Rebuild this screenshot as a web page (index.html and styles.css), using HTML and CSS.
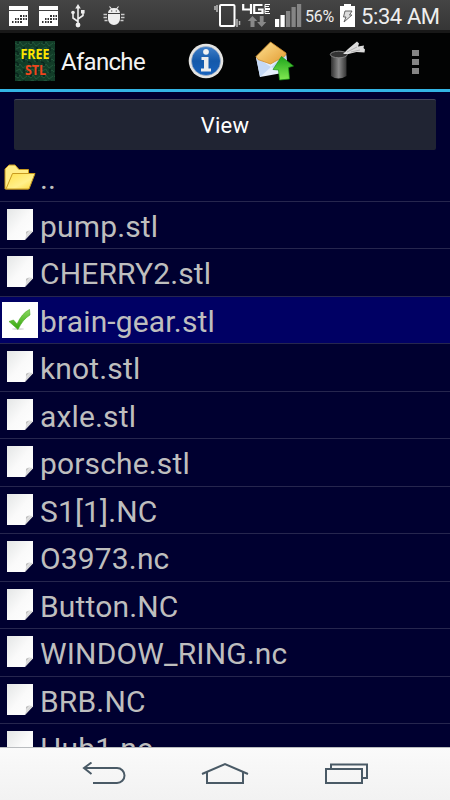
FILE: index.html
```
<!DOCTYPE html>
<html lang="en">
<head>
    <meta charset="UTF-8">
    <meta name="viewport" content="width=device-width, initial-scale=1.0">
    <title>Afanche</title>
    <link rel="stylesheet" href="styles.css">
</head>
<body>
    <!-- shared icons -->
    <svg class="defs" width="0" height="0">
        <defs>
            <linearGradient id="paper" x1="0" y1="0" x2="1" y2="1">
                <stop offset="0" stop-color="#e4e6e6"/>
                <stop offset="0.5" stop-color="#fafafa"/>
                <stop offset="1" stop-color="#ffffff"/>
            </linearGradient>
            <linearGradient id="curl" x1="0" y1="0" x2="1" y2="1">
                <stop offset="0" stop-color="#777"/>
                <stop offset="0.35" stop-color="#e4e4e4"/>
                <stop offset="1" stop-color="#8a8a8a"/>
            </linearGradient>
            <symbol id="file" viewBox="0 0 28 34">
                <path d="M1 1h26v22.500l-8 8.500H1z" fill="url(#paper)"/>
                <path d="M27 23q-5-1.500-7 1 .5 5-1.500 8z" fill="url(#curl)"/>
            </symbol>
            <symbol id="calendar" viewBox="0 0 20 21">
                <path d="M0 0h19v4H0zM0 5h19v15H0z" fill="#fff"/>
                <path d="M11 9h2v2h-2zM14 9h1.500v2H14zM16.500 9H18v2h-1.500zM6 12h1.500v2H6zM8.500 12H10v2H8.500zM11 12h2v2h-2zM14 12h1.500v2H14zM16.500 12H18v2h-1.500zM3 15h1.500v2H3zM6 15h1.500v2H6zM8.500 15H10v2H8.500zM11 15h2v2h-2z" fill="#333"/>
            </symbol>
        </defs>
    </svg>

    <div class="status-bar">
        <svg class="calendar" width="20" height="21"><use href="#calendar"/></svg>
        <svg class="calendar" width="20" height="21"><use href="#calendar"/></svg>
        <svg class="usb" width="14" height="24" viewBox="0 0 14 24" fill="none" stroke="#eee" stroke-width="1.600">
            <path d="M7 3v18M7 17.500L2 14V9M7 15l5-3.500V8"/>
            <path d="M7 0l2.800 4.500H4.200zM10 6h3.600v3.600H10z" fill="#eee" stroke="none"/>
            <circle cx="2" cy="8.500" r="1.800" fill="#eee" stroke="none"/>
            <circle cx="7" cy="21" r="2.400" fill="#eee" stroke="none"/>
        </svg>
        <svg class="bug" width="22" height="20" viewBox="0 0 22 20" fill="#eee">
            <path d="M5 7a6 5 0 0 1 12 0zM5 8h12v5a6 6 0 0 1-12 0z"/>
            <path d="M6.500 .5l2 2.500M15.500 .5l-2 2.500" stroke="#eee" stroke-width="1.200"/>
            <path d="M.5 8.500H4M.5 11.500H4M1.500 14.500h3M18 8.500h3.500M18 11.500h3.500M17.500 14.500h3" stroke="#ccc" stroke-width="1.500"/>
            <path d="M8 4.500h1.300v1H8zM12.700 4.500H14v1h-1.300z" fill="#444"/>
        </svg>
        <svg class="vibrate" width="28" height="25" viewBox="0 0 28 25" fill="none" stroke="#fff">
            <rect x="6" y="1" width="14.500" height="21" rx="1" stroke-width="2"/>
            <path d="M3 1v7M1 2v4M23 15v8M25.500 17v4" stroke="#bbb" stroke-width="1.500"/>
        </svg>
        <svg class="network" width="30" height="25" viewBox="0 0 30 25">
            <path d="M1.200 0v5.500h8.300M9 0v10M20.500 1h-8.300v8h8.300V5.500h-4.500" fill="none" stroke="#fff" stroke-width="2.200"/>
            <path d="M28 .5h-5v4h5M23 2.500h4M28 5.500h-5v4h5M23 7.500h4" fill="none" stroke="#fff" stroke-width="1"/>
            <path d="M10.500 12l4.800 5h-2.800v6H8.500v-6H5.700zM19.700 23l-4.600-5h2.700v-6h3.800v6h2.700z" fill="#888"/>
        </svg>
        <svg class="signal" width="27" height="24" viewBox="0 0 27 24">
            <path d="M0 15h4.200v8H0zM5.500 11h4.200v12H5.500z" fill="#fff"/>
            <path d="M11 7h4.200v16H11zM16.500 3h4.200v20h-4.200zM22 0h4.200v23H22z" fill="#858585"/>
        </svg>
        <span class="percent">56%</span>
        <svg class="battery" width="15" height="24" viewBox="0 0 15 24">
            <path d="M4 0h7v2h4v21H0V2h4z" fill="#fff"/>
            <path d="M5 7h7l-2.500 4H12L4 18l2-5H3.500z" fill="#ddd" stroke="#555" stroke-width=".9"/>
        </svg>
        <span class="clock">5:34 AM</span>
    </div>

    <div class="action-bar">
        <svg class="logo" width="40" height="40" viewBox="0 0 40 40">
            <defs>
                <pattern id="board" width="13" height="11" patternUnits="userSpaceOnUse">
                    <rect width="13" height="11" fill="#123d28"/>
                    <path d="M0 2l3 2 2-3 3 4 4-3M1 8l4-2 2 4 4-3 2 2" stroke="#22573b" fill="none"/>
                    <path d="M3 0v3M9 6v4M0 10l3 1" stroke="#08251c" stroke-width="1.500"/>
                </pattern>
            </defs>
            <rect width="40" height="40" fill="url(#board)"/>
            <text x="5.500" y="18" textLength="29" lengthAdjust="spacingAndGlyphs" fill="#ffe600">FREE</text>
            <text x="10" y="33.500" textLength="21" lengthAdjust="spacingAndGlyphs" fill="#f0451c">STL</text>
        </svg>
        <h1>Afanche</h1>
        <svg class="info" width="36" height="36" viewBox="0 0 36 36">
            <defs>
                <linearGradient id="blue" x1="0" y1="0" x2="0" y2="1">
                    <stop offset="0" stop-color="#3f7fc9"/>
                    <stop offset="0.5" stop-color="#1459aa"/>
                    <stop offset="1" stop-color="#1762bd"/>
                </linearGradient>
            </defs>
            <circle cx="18" cy="18" r="17.300" fill="#e4e4e2"/>
            <circle cx="18" cy="18" r="14.500" fill="url(#blue)" stroke="#a9b4c4" stroke-width=".6"/>
            <circle cx="18" cy="8.800" r="2.900" fill="#f2f2f2"/>
            <path d="M13.500 14h7v11.500h2.500v3H13v-3h3v-8.500h-2.500z" fill="#ececec"/>
        </svg>
        <svg class="mail" width="40" height="40" viewBox="0 0 40 40">
            <defs>
                <linearGradient id="flap" x1="0" y1="0" x2="1" y2="1">
                    <stop offset="0" stop-color="#ffe394"/>
                    <stop offset="1" stop-color="#e29a30"/>
                </linearGradient>
                <linearGradient id="arrow" x1="0" y1="0" x2="0" y2="1">
                    <stop offset="0" stop-color="#1fa51c"/>
                    <stop offset="1" stop-color="#82ea52"/>
                </linearGradient>
            </defs>
            <path d="M1 16l30-4 2 19-28 5z" fill="#e6effc"/>
            <path d="M1 16l15 10L5 36zM31 12L16 26l17 7z" fill="#c5d9f6"/>
            <path d="M1 15.500L15.500 1 31 12 30 15 15.500 23 3 18.500z" fill="url(#flap)" stroke="#d18e2c" stroke-width=".8"/>
            <path d="M26.500 15.500L38.500 25l-5 1.500 1 11.500-10 1-1-10-5.500-.5z" fill="url(#arrow)" stroke="#179416" stroke-width=".7"/>
        </svg>
        <svg class="trash" width="37" height="39" viewBox="0 0 37 39">
            <defs>
                <linearGradient id="can">
                    <stop offset="0" stop-color="#303030"/>
                    <stop offset="0.500" stop-color="#8b8b8b"/>
                    <stop offset="1" stop-color="#333"/>
                </linearGradient>
            </defs>
            <path d="M2 14v21q7 5 15.500 0V14z" fill="url(#can)"/>
            <ellipse cx="9.800" cy="13.500" rx="8.500" ry="3.300" fill="#333" stroke="#858585"/>
            <path d="M14 13l5-5L28 .5l2 2-1 3 6-1-.5 2.500 1.500 1.500-.5 3-8-.5-8 2-4 0z" fill="#dcdcdc"/>
            <path d="M18 11l10-5M22 11l9-2" stroke="#b0b0b0" fill="none"/>
        </svg>
        <div class="overflow"><i></i><i></i><i></i></div>
    </div>

    <div class="content">
        <button class="view-btn">View</button>
        <ul class="file-list">
            <li>
                <svg class="folder" width="34" height="28" viewBox="0 0 34 28">
                    <defs>
                        <linearGradient id="yellow" x1="0" y1="0" x2="1" y2="1">
                            <stop offset="0" stop-color="#ffe04a"/>
                            <stop offset="0.600" stop-color="#fff08b"/>
                            <stop offset="1" stop-color="#fbd83d"/>
                        </linearGradient>
                    </defs>
                    <path d="M1 26V6l4-4h6l4 4.500h9.500V14L24 26z" fill="#ffec86" stroke="#c89a20"/>
                    <path d="M2 26L8.500 10.500H31L25 26z" fill="url(#yellow)" stroke="#c89a20"/>
                </svg>
                <span>..</span>
            </li>
            <li><svg class="file" width="28" height="34"><use href="#file"/></svg><span>pump.stl</span></li>
            <li><svg class="file" width="28" height="34"><use href="#file"/></svg><span>CHERRY2.stl</span></li>
            <li class="selected">
                <svg class="check" width="36" height="36" viewBox="0 0 36 36">
                    <defs>
                        <linearGradient id="green" x1="0" y1="0" x2="0" y2="1">
                            <stop offset="0" stop-color="#8ad860"/>
                            <stop offset="1" stop-color="#35a60c"/>
                        </linearGradient>
                    </defs>
                    <rect width="36" height="36" fill="#fff"/>
                    <ellipse cx="16" cy="27" rx="6" ry="1" fill="#ddd"/>
                    <path d="M7 19.500l4.500-1.500 3.500 4Q20 11 27.500 7.500l.5 5.500Q21 17 16 27.500z" fill="url(#green)" stroke="#46a824" stroke-width=".6"/>
                </svg>
                <span>brain-gear.stl</span>
            </li>
            <li><svg class="file" width="28" height="34"><use href="#file"/></svg><span>knot.stl</span></li>
            <li><svg class="file" width="28" height="34"><use href="#file"/></svg><span>axle.stl</span></li>
            <li><svg class="file" width="28" height="34"><use href="#file"/></svg><span>porsche.stl</span></li>
            <li><svg class="file" width="28" height="34"><use href="#file"/></svg><span>S1[1].NC</span></li>
            <li><svg class="file" width="28" height="34"><use href="#file"/></svg><span>O3973.nc</span></li>
            <li><svg class="file" width="28" height="34"><use href="#file"/></svg><span>Button.NC</span></li>
            <li><svg class="file" width="28" height="34"><use href="#file"/></svg><span>WINDOW_RING.nc</span></li>
            <li><svg class="file" width="28" height="34"><use href="#file"/></svg><span>BRB.NC</span></li>
            <li><svg class="file" width="28" height="34"><use href="#file"/></svg><span>Hub1.nc</span></li>
        </ul>
    </div>

    <div class="nav-bar">
        <svg width="44" height="24" viewBox="0 0 44 24">
            <path d="M2 6h33a7.500 7.500 0 0 1 0 15H11M9.500 .5L2 6l7.500 6"/>
        </svg>
        <svg width="48" height="24" viewBox="0 0 48 24">
            <path d="M1 12L24 2l23 10M6 10v11h36V10"/>
        </svg>
        <svg width="44" height="24" viewBox="0 0 44 24">
            <path d="M2 7h36v14H2zM7 7V2.500h36V16h-5"/>
        </svg>
    </div>
</body>
</html>
```
FILE: styles.css
```
:root {
    --background: #000030;
    --selected: #000064;
    --divider: #26264e;
    --accent: #33b5e5;
    --text-color: #bebebe;
}

* {
    margin: 0;
    padding: 0;
    box-sizing: border-box;
    font-family: Roboto, sans-serif;
}

body {
    width: 450px;
    height: 800px;
    overflow: hidden;
    display: flex;
    flex-direction: column;
    background-color: #000;
}

svg {
    display: block;
    flex: none;
}

.defs {
    position: absolute;
}

.status-bar {
    height: 33px;
    flex: none;
    display: flex;
    align-items: flex-start;
    padding: 4px 0 0 9px;
    color: #eee;
    background: linear-gradient(#454545, #363636 30px, #181818 30px);
}

.calendar {
    margin: 2px 10px 0 0;
}

.usb {
    margin: 0 17px 0 2px;
}

.bug {
    margin: 2px 0 0 1px;
}

.vibrate {
    margin-left: 89px;
}

.network {
    margin-left: 0;
}

.signal {
    margin-left: 3px;
}

.percent {
    width: 30px;
    margin-left: 3px;
    font-size: 16px;
    line-height: 25px;
    letter-spacing: -0.3px;
}

.battery {
    margin-left: 5px;
}

.clock {
    margin-left: 6px;
    font-size: 22px;
    line-height: 25px;
    letter-spacing: -0.4px;
    white-space: nowrap;
}

.action-bar {
    height: 59px;
    flex: none;
    display: flex;
    align-items: center;
    padding-left: 15px;
    background-color: #020303;
    border-bottom: 3px solid var(--accent);
}

.logo text {
    font-family: "Open Sans", sans-serif;
    font-size: 14px;
    font-weight: 700;
}

.action-bar h1 {
    width: 127px;
    margin-left: 6px;
    padding-top: 2px;
    font-size: 24px;
    font-weight: 400;
    letter-spacing: -0.700px;
    color: #f3f3f3;
}

.mail {
    margin-left: 31px;
}

.trash {
    margin: -2px 0 0 34px;
}

.overflow {
    margin: 1px 0 0 46px;
    display: flex;
    flex-direction: column;
    gap: 3px;
}

.overflow i {
    width: 7px;
    height: 6px;
    background-color: #858585;
}

.content {
    flex: 1;
    min-height: 0;
    overflow: hidden;
    padding-top: 7px;
    background-color: var(--background);
}

.view-btn {
    display: block;
    width: 422px;
    height: 51px;
    margin: 0 auto 4px 14px;
    border: none;
    border-top: 1px solid #42465a;
    border-radius: 2px;
    background-color: #202433;
    color: #fff;
    font-size: 22px;
    letter-spacing: 0.2px;
}

.file-list {
    list-style: none;
}

.file-list li {
    height: 47.500px;
    display: flex;
    align-items: center;
    padding-left: 6px;
    border-bottom: 1px solid var(--divider);
    color: var(--text-color);
    font-size: 30px;
    letter-spacing: 0.15px;
    white-space: nowrap;
}

.file-list span {
    padding-top: 3px;
}

.file {
    margin-right: 6px;
}

.folder {
    margin: 0 2px 0 -2px;
}

.check {
    margin: 0 2px 0 -4px;
}

.file-list .selected {
    background-color: var(--selected);
}

.nav-bar {
    height: 53px;
    flex: none;
    display: flex;
    justify-content: space-between;
    padding: 14px 82px 0;
    border-top: 1px solid #b9bcbf;
    background: linear-gradient(#fafafa, #f2f2f2);
}

.nav-bar path {
    fill: none;
    stroke: #4a5a66;
    stroke-width: 2;
}
```
